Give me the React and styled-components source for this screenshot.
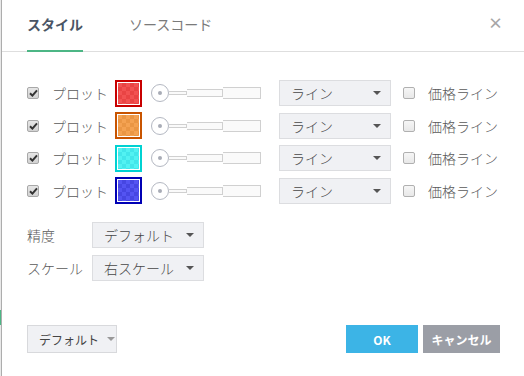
import styled, { createGlobalStyle } from "styled-components";

const GlobalStyle = createGlobalStyle`
  html, body {
    margin: 0;
    padding: 0;
    width: 524px;
    height: 376px;
    overflow: hidden;
    background: #f4f4f4;
  }
  body {
    font-family: "Noto Sans CJK JP", "Noto Sans", sans-serif;
  }
`;

const Page = styled.div`
  display: flex;
  width: 524px;
  height: 376px;
`;

const Edge = styled.div`
  width: 1px;
  background: linear-gradient(
    to bottom,
    #e8e8e8 0 310px,
    #4cb685 310px 325px,
    #e8e8e8 325px
  );
`;

const Dialog = styled.div`
  flex: 1;
  display: flex;
  flex-direction: column;
  background: #fff;
  border-left: 1px solid #adadad;
`;

const Header = styled.div`
  display: flex;
  align-items: stretch;
  height: 51px;
  padding: 0 21px 0 25px;
  border-bottom: 1px solid #dedede;
`;

const Tab = styled.div`
  display: flex;
  align-items: center;
  margin-right: 46px;
  padding-bottom: 2px;
  font-size: 14px;
  font-weight: ${(p) => (p.$active ? 700 : 400)};
  color: ${(p) => (p.$active ? "#4a5565" : "#7a7a7a")};
  border-bottom: 2px solid ${(p) => (p.$active ? "#4cb685" : "transparent")};
  margin-bottom: -1px;
`;

const Close = styled.div`
  margin-left: auto;
  align-self: center;
  margin-bottom: 6px;
  font-size: 15px;
  font-weight: 700;
  color: #a6a6a6;
  line-height: 1;
`;

const Body = styled.div`
  display: flex;
  flex-direction: column;
  padding: 28px 0 0 25px;
`;

const Rows = styled.div`
  display: flex;
  flex-direction: column;
  gap: 6.6px;
`;

const Row = styled.div`
  display: flex;
  align-items: center;
  height: 26px;
`;

const Check = styled.span`
  box-sizing: border-box;
  width: 12px;
  height: 12px;
  border: 1px solid ${(p) => (p.$checked ? "#a8a8a8" : "#b0b0b0")};
  border-radius: 2px;
  background: ${(p) =>
    p.$checked ? "linear-gradient(#e6e6e6, #d2d2d2)" : "linear-gradient(#f6f6f6, #e8e8e8)"};
  display: flex;
  align-items: center;
  justify-content: center;
`;

const PlotLabel = styled.span`
  margin-left: 13px;
  width: 63px;
  font-size: 14px;
  font-weight: 300;
  color: #595959;
`;

const Swatch = styled.span`
  box-sizing: border-box;
  width: 27px;
  height: 27px;
  border: 2px solid ${(p) => p.$edge};
  padding: 1px;
  background: #fff;
  display: flex;
`;

const Checker = styled.span`
  flex: 1;
  background-color: ${(p) => p.$a};
  background-image: linear-gradient(45deg, ${(p) => p.$b} 25%, transparent 25%, transparent 75%, ${(p) => p.$b} 75%),
    linear-gradient(45deg, ${(p) => p.$b} 25%, transparent 25%, transparent 75%, ${(p) => p.$b} 75%);
  background-size: 8px 8px;
  background-position: 0 0, 4px 4px;
`;

const Slider = styled.span`
  display: flex;
  align-items: center;
  margin-left: 9px;
  width: 110px;
`;

const Knob = styled.span`
  box-sizing: border-box;
  width: 18px;
  height: 18px;
  border: 1px solid #b4b8c2;
  border-radius: 50%;
  background: #fff;
  display: flex;
  align-items: center;
  justify-content: center;
  &::after {
    content: "";
    width: 4px;
    height: 4px;
    border-radius: 50%;
    background: #a8acb6;
  }
`;

const Track = styled.span`
  box-sizing: border-box;
  width: ${(p) => p.$w}px;
  height: ${(p) => p.$h}px;
  border: 1px solid #d0d0d0;
  border-left: none;
  background: #fafafa;
`;

const Select = styled.div`
  box-sizing: border-box;
  display: flex;
  align-items: center;
  width: ${(p) => p.$w || 112}px;
  height: 26px;
  padding: 0 9px 0 11px;
  background: #f0f1f4;
  border: 1px solid #dcdde0;
  font-size: 14px;
  font-weight: 300;
  color: #474747;
`;

const SelectText = styled.span`
  flex: 1;
`;

const Caret = styled.span`
  width: 0;
  height: 0;
  border-left: 4px solid transparent;
  border-right: 4px solid transparent;
  border-top: 4px solid ${(p) => p.$color || "#555"};
`;

const RowSelect = styled(Select)`
  margin-left: 18px;
`;

const PriceCheck = styled(Check)`
  margin-left: 12px;
`;

const PriceLabel = styled.span`
  margin-left: 13px;
  font-size: 14px;
  font-weight: 300;
  color: #595959;
`;

const Settings = styled.div`
  display: grid;
  grid-template-columns: 65px auto;
  row-gap: 7px;
  margin-top: 18px;
  align-items: center;
  justify-content: start;
`;

const FieldLabel = styled.span`
  font-size: 14px;
  font-weight: 300;
  color: #595959;
`;

const Footer = styled.div`
  display: flex;
  align-items: center;
  margin-top: auto;
  padding: 0 24px 23px 25px;
`;

const DefaultButton = styled.div`
  box-sizing: border-box;
  display: flex;
  align-items: center;
  gap: 8px;
  width: 90px;
  height: 28px;
  padding: 0 0 0 11px;
  background: #f0f1f4;
  border: 1px solid #d8d9dc;
  font-size: 12px;
  color: #444;
`;

const Button = styled.div`
  display: flex;
  align-items: center;
  justify-content: center;
  width: ${(p) => p.$w}px;
  height: 28px;
  margin-left: ${(p) => p.$gap || 0}px;
  background: ${(p) => p.$bg};
  color: #fff;
  font-size: 12px;
  font-weight: 700;
`;

const Spacer = styled.span`
  flex: 1;
`;

const CheckMark = () => (
  <svg width="9" height="8" viewBox="0 0 9 8">
    <path d="M1 4.2 L3.4 6.6 L8 1.4" fill="none" stroke="#333" strokeWidth="2" />
  </svg>
);

const plots = [
  { edge: "#c80000", a: "#f25252", b: "#e94444" },
  { edge: "#c85400", a: "#f4a252", b: "#ea9644" },
  { edge: "#00d2d2", a: "#52f2f2", b: "#42e6ea" },
  { edge: "#0000b4", a: "#5454f2", b: "#4646e2" },
];

export default function App() {
  return (
    <Page>
      <GlobalStyle />
      <Edge />
      <Dialog>
        <Header>
          <Tab $active>スタイル</Tab>
          <Tab>ソースコード</Tab>
          <Close>×</Close>
        </Header>
        <Body>
          <Rows>
            {plots.map((p, i) => (
              <Row key={i}>
                <Check $checked>
                  <CheckMark />
                </Check>
                <PlotLabel>プロット</PlotLabel>
                <Swatch $edge={p.edge}>
                  <Checker $a={p.a} $b={p.b} />
                </Swatch>
                <Slider>
                  <Knob />
                  <Track $w={18} $h={4} />
                  <Track $w={36} $h={8} />
                  <Track $w={38} $h={12} />
                </Slider>
                <RowSelect>
                  <SelectText>ライン</SelectText>
                  <Caret />
                </RowSelect>
                <PriceCheck />
                <PriceLabel>価格ライン</PriceLabel>
              </Row>
            ))}
          </Rows>
          <Settings>
            <FieldLabel>精度</FieldLabel>
            <Select>
              <SelectText>デフォルト</SelectText>
              <Caret />
            </Select>
            <FieldLabel>スケール</FieldLabel>
            <Select>
              <SelectText>右スケール</SelectText>
              <Caret />
            </Select>
          </Settings>
        </Body>
        <Footer>
          <DefaultButton>
            デフォルト
            <Caret $color="#999" />
          </DefaultButton>
          <Spacer />
          <Button $w={72} $bg="#3cb4e6">OK</Button>
          <Button $w={77} $gap={5} $bg="#9b9ea6">キャンセル</Button>
        </Footer>
      </Dialog>
    </Page>
  );
}
